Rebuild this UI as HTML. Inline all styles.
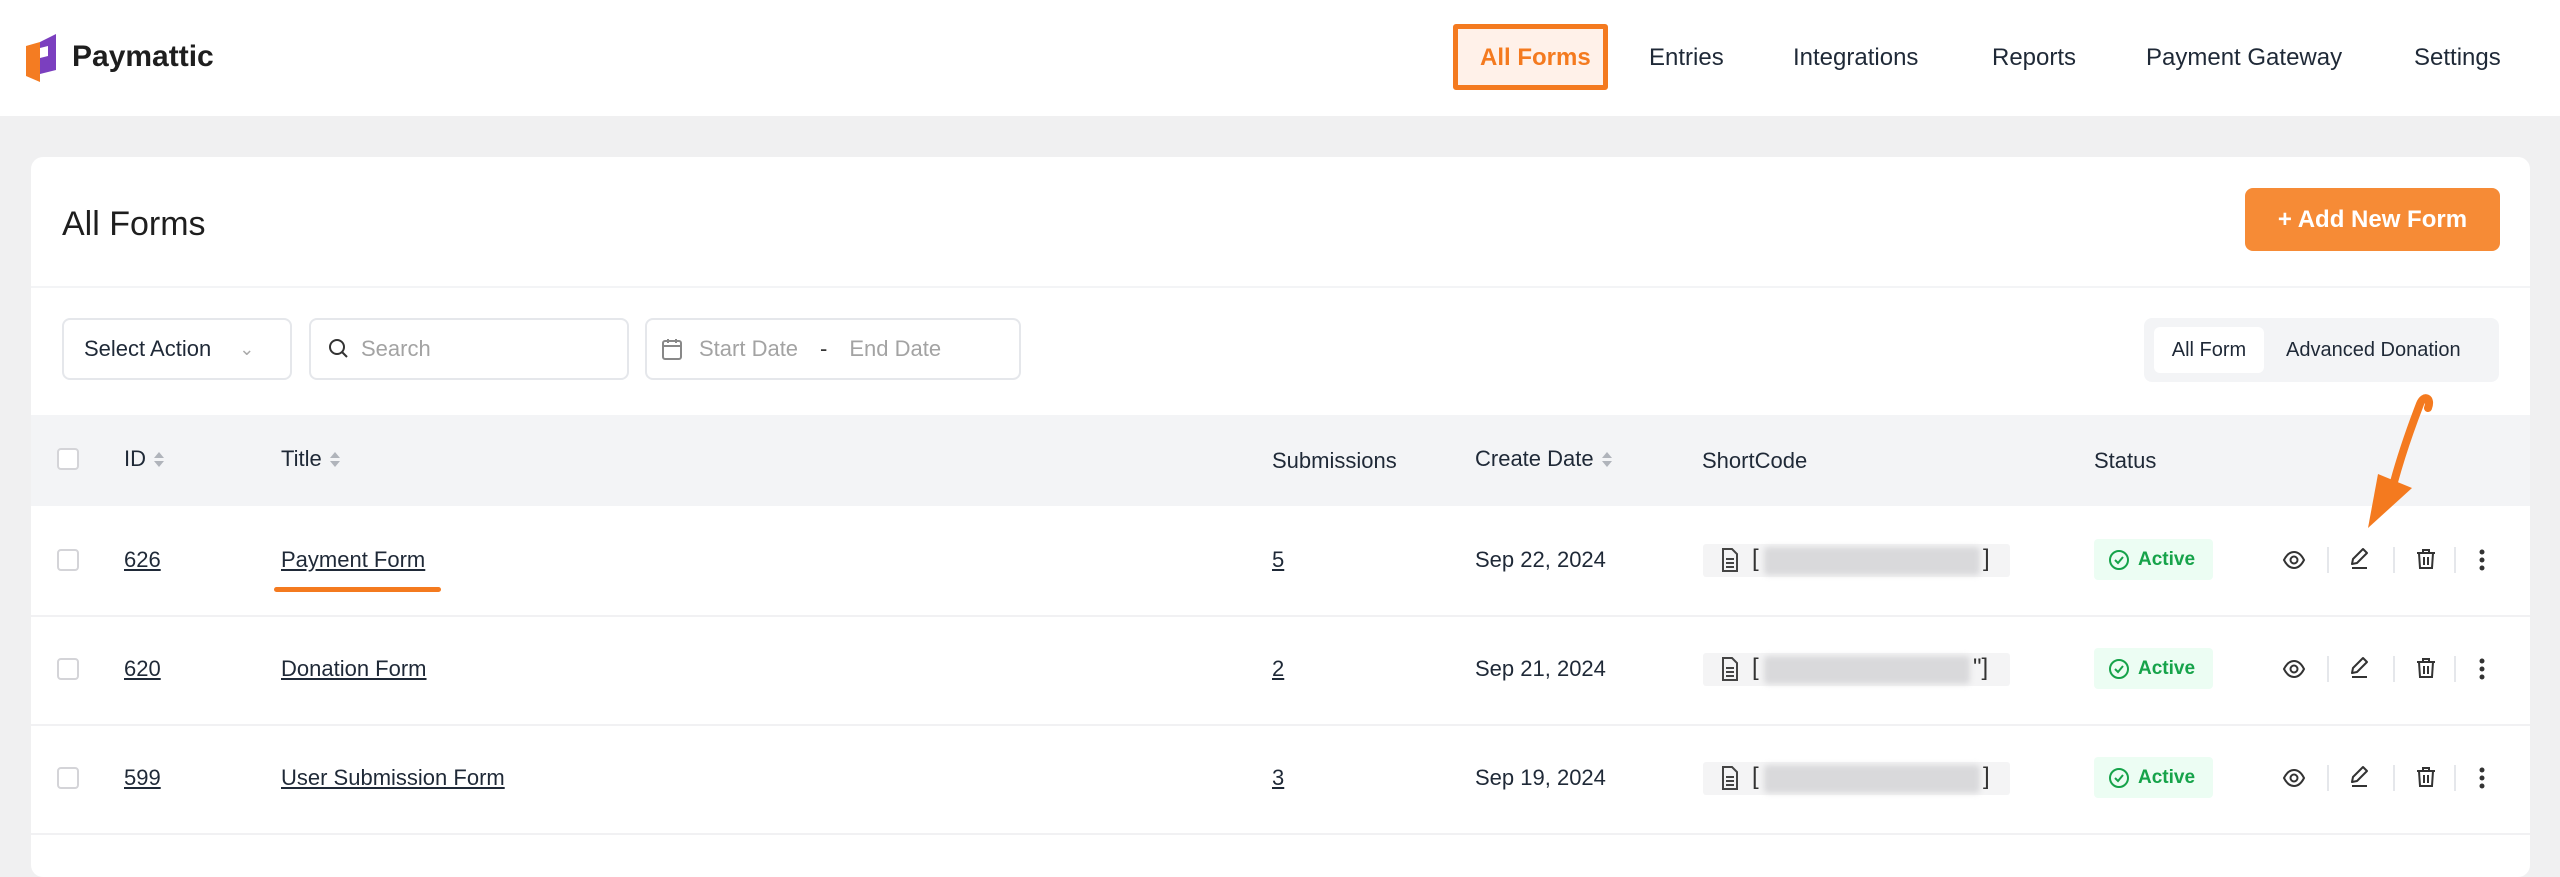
<!DOCTYPE html>
<html><head><meta charset="utf-8"><style>
*{box-sizing:border-box;margin:0;padding:0}
body{width:2560px;height:843px;overflow:hidden;background:#f0f0f1;font-family:"Liberation Sans",Arial,sans-serif;color:#1e1e1e;position:relative}
.abs{position:absolute}
.hdr{left:0;top:0;width:2560px;height:116px;background:#fff}
.nav{font-size:24px;color:#1f2937;top:44px}
.card{left:31px;top:157px;width:2499px;height:720px;background:#fff;border-radius:12px}
.inp{border:2px solid #e5e7eb;border-radius:8px;height:62px;top:318px;font-size:22px;color:#a3a3a3;display:flex;align-items:center}
.th{top:446px;font-size:22px;color:#1f2937;font-weight:500}
.cb{width:22px;height:22px;border:2px solid #d4d4d8;border-radius:4px;background:#fff}
.cell{font-size:22px;color:#1f2937}
.u{text-decoration:underline}
.sc{width:307px;height:33px;background:#f4f4f5;border-radius:3px}
.act{width:119px;height:41px;background:#ecfdf3;border-radius:4px;color:#16a34a;font-size:19px;font-weight:bold;display:flex;align-items:center;gap:8px;padding-left:14px}
.sep{width:2px;height:26px;background:#e5e7eb}
.sort{display:inline-block;vertical-align:middle;margin-left:8px}
</style></head><body>
<div class="abs hdr"></div>
<svg class="abs" style="left:26px;top:34px" width="34" height="48" viewBox="0 0 34 48"><path d="M0 12 L14 8 L14 48 L0 42 Z" fill="#f47c22"/><path d="M14 8 L30 0 L30 36 L14 40 Z" fill="#7b3fbf"/><path d="M14 14 L22 12 L22 22 L14 24Z" fill="#fff"/></svg>
<div class="abs" style="left:72px;top:40px;font-size:30px;font-weight:bold;color:#1e1e1e">Paymattic</div>
<div class="abs" style="left:1453px;top:24px;width:155px;height:66px;border:5px solid #f47a1f;border-radius:3px;background:#fff1e9"></div>
<div class="abs nav" style="left:1480px;color:#f47a1f;font-weight:bold">All Forms</div>
<div class="abs nav" style="left:1649px">Entries</div>
<div class="abs nav" style="left:1793px">Integrations</div>
<div class="abs nav" style="left:1992px">Reports</div>
<div class="abs nav" style="left:2146px">Payment Gateway</div>
<div class="abs nav" style="left:2414px">Settings</div>

<div class="abs card"></div>
<div class="abs" style="left:62px;top:205px;font-size:34px;color:#1e1e1e">All Forms</div>
<div class="abs" style="left:2245px;top:188px;width:255px;height:63px;background:#f68b36;border-radius:8px;color:#fff;font-size:24px;font-weight:bold;display:flex;align-items:center;justify-content:center">+ Add New Form</div>
<div class="abs" style="left:31px;top:286px;width:2499px;height:2px;background:#f3f4f6"></div>

<div class="abs inp" style="left:62px;width:230px;padding-left:20px;color:#1f2937">Select Action<span style="margin-left:28px;color:#aaa;font-size:18px">&#8964;</span></div>
<div class="abs inp" style="left:309px;width:320px;padding-left:16px"><svg width="24" height="24" viewBox="0 0 24 24"><circle cx="10" cy="10" r="7" fill="none" stroke="#333" stroke-width="2"/><path d="M15 15l5 5" stroke="#333" stroke-width="2"/></svg><span style="margin-left:10px">Search</span></div>
<div class="abs inp" style="left:645px;width:376px;padding-left:14px"><svg width="22" height="24" viewBox="0 0 22 24"><rect x="2" y="4" width="18" height="18" rx="2" fill="none" stroke="#888" stroke-width="2"/><path d="M2 9h18M7 2v4M15 2v4" stroke="#888" stroke-width="2"/></svg><span style="margin-left:16px">Start Date</span><span style="margin:0 22px;color:#333">-</span><span>End Date</span></div>

<div class="abs" style="left:2144px;top:318px;width:355px;height:64px;background:#f3f4f6;border-radius:8px"></div>
<div class="abs" style="left:2154px;top:327px;width:110px;height:46px;background:#fff;border-radius:6px;font-size:20px;display:flex;align-items:center;justify-content:center;color:#1f2937">All Form</div>
<div class="abs" style="left:2286px;top:339px;font-size:20px;color:#1f2937">Advanced Donation</div>

<div class="abs" style="left:31px;top:415px;width:2499px;height:91px;background:#f3f4f6"></div>
<div class="abs cb" style="left:57px;top:448px"></div>
<svg width="0" height="0"><defs><g id="s"><path d="M0 6l5-6 5 6z M0 9l5 6 5-6z" fill="#b0b4bb"/></g></defs></svg>
<div class="abs th" style="left:124px">ID<svg class="sort" width="12" height="16"><use href="#s"/></svg></div>
<div class="abs th" style="left:281px">Title<svg class="sort" width="12" height="16"><use href="#s"/></svg></div>
<div class="abs th" style="left:1272px;top:448px">Submissions</div>
<div class="abs th" style="left:1475px">Create Date<svg class="sort" width="12" height="16"><use href="#s"/></svg></div>
<div class="abs th" style="left:1702px;top:448px">ShortCode</div>
<div class="abs th" style="left:2094px;top:448px">Status</div>

<!-- rows -->
<div class="abs" style="left:31px;top:615px;width:2499px;height:2px;background:#f1f1f3"></div>
<div class="abs" style="left:31px;top:724px;width:2499px;height:2px;background:#f1f1f3"></div>
<div class="abs" style="left:31px;top:833px;width:2499px;height:2px;background:#f1f1f3"></div>

<svg width="0" height="0"><defs>
<g id="eye"><path d="M2 12C5 6 9 4 12 4s7 2 10 8c-3 6-7 8-10 8s-7-2-10-8z" fill="none" stroke="#333" stroke-width="2"/><circle cx="12" cy="12" r="3.5" fill="none" stroke="#333" stroke-width="2"/></g>
<g id="pen"><path d="M15 3l4 4-10 10-5 1 1-5z" fill="none" stroke="#333" stroke-width="2" stroke-linejoin="round"/><path d="M4 22h15" stroke="#333" stroke-width="2"/></g>
<g id="bin"><path d="M3 6h18M9 6V3h6v3M5 6l1 15h12l1-15M10 10v8M14 10v8" fill="none" stroke="#333" stroke-width="2"/></g>
<g id="dot"><circle cx="4" cy="4" r="2.5" fill="#333"/><circle cx="4" cy="12" r="2.5" fill="#333"/><circle cx="4" cy="20" r="2.5" fill="#333"/></g>
<g id="chk"><circle cx="11" cy="11" r="9" fill="none" stroke="#16a34a" stroke-width="2"/><path d="M7 11l3 3 5-6" fill="none" stroke="#16a34a" stroke-width="2"/></g>
<g id="doc"><path d="M3 1h9l5 5v17H3z" fill="none" stroke="#444" stroke-width="2"/><path d="M6 11h8M6 15h8M6 19h8" stroke="#444" stroke-width="2"/></g>
</defs></svg>

<!-- row template via absolute positions -->
<div class="abs cb" style="left:57px;top:549px"></div>
<div class="abs cell u" style="left:124px;top:547px">626</div>
<div class="abs cell u" style="left:281px;top:547px">Payment Form</div>
<div class="abs" style="left:274px;top:587px;width:167px;height:5px;background:#f47a1f;border-radius:3px"></div>
<div class="abs cell u" style="left:1272px;top:547px">5</div>
<div class="abs cell" style="left:1475px;top:547px">Sep 22, 2024</div>

<div class="abs cb" style="left:57px;top:658px"></div>
<div class="abs cell u" style="left:124px;top:656px">620</div>
<div class="abs cell u" style="left:281px;top:656px">Donation Form</div>
<div class="abs cell u" style="left:1272px;top:656px">2</div>
<div class="abs cell" style="left:1475px;top:656px">Sep 21, 2024</div>

<div class="abs cb" style="left:57px;top:767px"></div>
<div class="abs cell u" style="left:124px;top:765px">599</div>
<div class="abs cell u" style="left:281px;top:765px">User Submission Form</div>
<div class="abs cell u" style="left:1272px;top:765px">3</div>
<div class="abs cell" style="left:1475px;top:765px">Sep 19, 2024</div>

<!-- shortcode, status, actions for each row -->
<div class="abs sc" style="left:1703px;top:544px"></div>
<div class="abs sc" style="left:1703px;top:653px"></div>
<div class="abs sc" style="left:1703px;top:762px"></div>
<svg class="abs" style="left:1720px;top:548px" width="20" height="24"><use href="#doc"/></svg>
<svg class="abs" style="left:1720px;top:657px" width="20" height="24"><use href="#doc"/></svg>
<svg class="abs" style="left:1720px;top:766px" width="20" height="24"><use href="#doc"/></svg>
<div class="abs" style="left:1752px;top:545px;font-size:24px;color:#333">[</div>
<div class="abs" style="left:1752px;top:654px;font-size:24px;color:#333">[</div>
<div class="abs" style="left:1752px;top:763px;font-size:24px;color:#333">[</div>
<div class="abs" style="left:1764px;top:547px;width:216px;height:28px;background:#d9d9db;border-radius:4px;filter:blur(3px)"></div>
<div class="abs" style="left:1764px;top:656px;width:206px;height:28px;background:#d9d9db;border-radius:4px;filter:blur(3px)"></div>
<div class="abs" style="left:1764px;top:765px;width:216px;height:28px;background:#d9d9db;border-radius:4px;filter:blur(3px)"></div>
<div class="abs" style="left:1983px;top:545px;font-size:24px;color:#333">]</div>
<div class="abs" style="left:1973px;top:654px;font-size:24px;color:#333">"]</div>
<div class="abs" style="left:1983px;top:763px;font-size:24px;color:#333">]</div>

<div class="abs act" style="left:2094px;top:539px"><svg width="22" height="22"><use href="#chk"/></svg>Active</div>
<div class="abs act" style="left:2094px;top:648px"><svg width="22" height="22"><use href="#chk"/></svg>Active</div>
<div class="abs act" style="left:2094px;top:757px"><svg width="22" height="22"><use href="#chk"/></svg>Active</div>

<div class="abs" style="left:2282px;top:548px;display:flex;align-items:center;gap:0">
</div>
<!-- row1 actions -->
<svg class="abs" style="left:2282px;top:548px" width="24" height="24"><use href="#eye"/></svg>
<div class="abs sep" style="left:2327px;top:547px"></div>
<svg class="abs" style="left:2348px;top:546px" width="24" height="24"><use href="#pen"/></svg>
<div class="abs sep" style="left:2393px;top:547px"></div>
<svg class="abs" style="left:2414px;top:547px" width="24" height="24"><use href="#bin"/></svg>
<div class="abs sep" style="left:2454px;top:547px"></div>
<svg class="abs" style="left:2478px;top:548px" width="8" height="24"><use href="#dot"/></svg>
<!-- row2 -->
<svg class="abs" style="left:2282px;top:657px" width="24" height="24"><use href="#eye"/></svg>
<div class="abs sep" style="left:2327px;top:656px"></div>
<svg class="abs" style="left:2348px;top:655px" width="24" height="24"><use href="#pen"/></svg>
<div class="abs sep" style="left:2393px;top:656px"></div>
<svg class="abs" style="left:2414px;top:656px" width="24" height="24"><use href="#bin"/></svg>
<div class="abs sep" style="left:2454px;top:656px"></div>
<svg class="abs" style="left:2478px;top:657px" width="8" height="24"><use href="#dot"/></svg>
<!-- row3 -->
<svg class="abs" style="left:2282px;top:766px" width="24" height="24"><use href="#eye"/></svg>
<div class="abs sep" style="left:2327px;top:765px"></div>
<svg class="abs" style="left:2348px;top:764px" width="24" height="24"><use href="#pen"/></svg>
<div class="abs sep" style="left:2393px;top:765px"></div>
<svg class="abs" style="left:2414px;top:765px" width="24" height="24"><use href="#bin"/></svg>
<div class="abs sep" style="left:2454px;top:765px"></div>
<svg class="abs" style="left:2478px;top:766px" width="8" height="24"><use href="#dot"/></svg>

<!-- arrow -->
<svg class="abs" style="left:2340px;top:390px" width="110" height="145" viewBox="0 0 110 145">
<path d="M88 18 C92 8 84 4 80 14 C70 40 60 70 54 92" fill="none" stroke="#f47a1f" stroke-width="8" stroke-linecap="round"/>
<path d="M38 84 L72 98 L28 138 Z" fill="#f47a1f"/>
</svg>
</body></html>
